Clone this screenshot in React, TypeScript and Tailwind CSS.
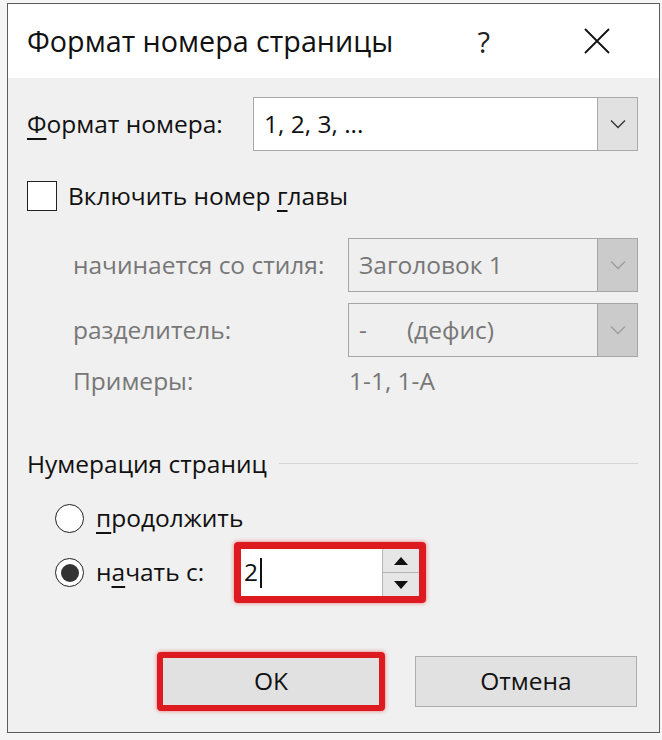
import React from "react";

const font = { fontFamily: '"Open Sans", "Noto Sans", sans-serif' };

function Chevron({ color }: { color: string }) {
  return (
    <svg width="16" height="10" viewBox="0 0 16 10" fill="none">
      <path d="M1 1.5 L8 8.5 L15 1.5" stroke={color} strokeWidth="1.3" />
    </svg>
  );
}

function Combo({ value, width, disabled }: { value: React.ReactNode; width: string; disabled?: boolean }) {
  return (
    <div
      className={
        "flex h-[54px] border " +
        width +
        (disabled ? " border-[#a6a6a6] bg-[#efefef] text-[#777]" : " border-[#a9a9a9] bg-white text-[#111]")
      }
    >
      <div className="flex flex-1 items-center whitespace-nowrap pl-[10px]">{value}</div>
      <div
        className={
          "flex w-[40px] items-center justify-center border-l " +
          (disabled ? "border-[#a6a6a6] bg-[#cbcbcb]" : "border-[#a9a9a9] bg-[#e1e1e1]")
        }
      >
        <Chevron color={disabled ? "#9c9c9c" : "#333"} />
      </div>
    </div>
  );
}

function Radio({ checked }: { checked?: boolean }) {
  return (
    <div className="flex h-[29px] w-[29px] items-center justify-center rounded-full border-[1.5px] border-[#222] bg-white">
      {checked && <div className="h-[18px] w-[18px] rounded-full bg-[#333]" />}
    </div>
  );
}

export default function App() {
  return (
    <div
      className="h-[740px] w-[662px] bg-[#f5f5f5] pl-[7px] pt-[3px] text-[24.5px] leading-none whitespace-nowrap text-[#111]"
      style={font}
    >
      <div className="flex h-[730px] w-[653px] flex-col border border-[#5c5c5c] bg-[#f0f0f0]">
        {/* title bar */}
        <div className="flex h-[74px] items-center bg-white pl-[19px] pr-[49px]">
          <span className="flex-1 text-[28.7px] text-[#111]">Формат номера страницы</span>
          <span className="mr-[94px] text-[29px] text-[#222]">?</span>
          <svg width="26" height="26" viewBox="0 0 26 26">
            <path d="M1 1 L25 25 M25 1 L1 25" stroke="#111" strokeWidth="1.8" />
          </svg>
        </div>

        {/* body */}
        <div className="flex flex-1 flex-col pl-[19px] pr-[21px]">
          <div className="mt-[19px] flex items-center">
            <span className="w-[226px]">
              <span className="underline underline-offset-[5px]">Ф</span>ормат номера:
            </span>
            <Combo width="w-[385px]" value="1, 2, 3, ..." />
          </div>

          <div className="mt-[30px] flex items-center">
            <div className="h-[30px] w-[30px] border-[1.5px] border-[#222] bg-white" />
            <span className="ml-[11px]">
              Включить номер <span className="underline underline-offset-[5px]">г</span>лавы
            </span>
          </div>

          <div className="mt-[27px] flex items-center text-[#777]">
            <span className="w-[321px] pl-[46px]">начинается со стиля:</span>
            <Combo width="w-[290px]" value="Заголовок 1" disabled />
          </div>

          <div className="mt-[11px] flex items-center text-[#777]">
            <span className="w-[321px] pl-[46px]">разделитель:</span>
            <Combo
              width="w-[290px]"
              disabled
              value={
                <span>
                  -<span className="ml-[40px]">(дефис)</span>
                </span>
              }
            />
          </div>

          <div className="mt-[12px] flex items-center text-[#777]">
            <span className="w-[322px] pl-[46px]">Примеры:</span>
            <span>1-1, 1-A</span>
          </div>

          <div className="mt-[58px] flex items-center">
            <span>Нумерация страниц</span>
            <div className="ml-[12px] h-px flex-1 bg-[#d5d5d5]" />
          </div>

          <div className="mt-[28px] flex items-center pl-[28px]">
            <Radio />
            <span className="ml-[12px]">
              <span className="underline underline-offset-[5px]">п</span>родолжить
            </span>
          </div>

          <div className="mt-[9px] flex items-center pl-[28px]">
            <Radio checked />
            <span className="ml-[12px] w-[138px]">
              н<span className="underline underline-offset-[5px]">а</span>чать с:
            </span>
            <div className="flex h-[61px] w-[192px] rounded-[4px] border-[7px] border-[#de1a21] bg-white shadow-[0_0_4px_rgba(230,40,40,0.6)]">
              <div className="flex flex-1 items-center pl-[3px]">
                <span>2</span>
                <div className="ml-[2px] h-[30px] w-[2px] bg-[#111]" />
              </div>
              <div className="flex w-[37px] flex-col border-l border-[#b5b5b5] bg-[#e6e6e6]">
                <div className="flex flex-1 items-center justify-center border-b border-[#b5b5b5]">
                  <svg width="14" height="8" viewBox="0 0 14 8">
                    <path d="M0 8 L7 0 L14 8 Z" fill="#111" />
                  </svg>
                </div>
                <div className="flex flex-1 items-center justify-center">
                  <svg width="14" height="8" viewBox="0 0 14 8">
                    <path d="M0 0 L7 8 L14 0 Z" fill="#111" />
                  </svg>
                </div>
              </div>
            </div>
          </div>

          <div className="mt-[49px] flex items-center">
            <div className="ml-[130px] flex h-[59px] w-[228px] items-center justify-center rounded-[4px] border-[6px] border-[#de1a21] bg-[#e1e1e1] shadow-[0_0_4px_rgba(230,40,40,0.6)]">
              OK
            </div>
            <div className="ml-[30px] flex h-[51px] w-[222px] items-center justify-center border border-[#adadad] bg-[#e1e1e1]">
              Отмена
            </div>
          </div>
        </div>
      </div>
    </div>
  );
}
